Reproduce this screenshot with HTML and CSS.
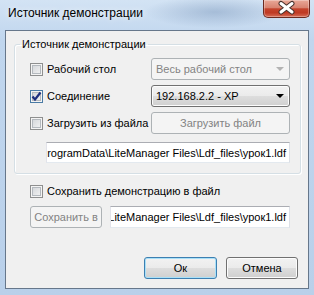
FILE: index.html
```html
<!DOCTYPE html>
<html lang="ru">
<head>
  <meta charset="UTF-8">
  <title>Источник демонстрации</title>
  <link rel="stylesheet" href="styles.css">
</head>
<body>

<div class="window">
  <div class="titlebar">
    <span class="title">Источник демонстрации</span>
    <div class="close">
      <svg width="47" height="18" viewBox="0 0 47 18">
        <path d="M18 4.5 L29 13 M29 4.5 L18 13" stroke="#47312c" stroke-width="5" stroke-linecap="round" fill="none"/>
        <path d="M18 4.5 L29 13 M29 4.5 L18 13" stroke="#fff" stroke-width="3" stroke-linecap="round" fill="none"/>
      </svg>
    </div>
  </div>

  <div class="client">
    <fieldset class="group">
      <legend>Источник демонстрации</legend>
      <div class="group-body">
        <label class="check"><span class="box"></span>Рабочий стол</label>
        <div class="combo disabled"><span>Весь рабочий стол</span><span class="arrow"></span></div>

        <label class="check"><span class="box checked">
          <svg width="11" height="11" viewBox="0 0 11 11"><path d="M1.5 5.5 L4 8.5 L9.5 1.5" stroke="#1d2f7e" stroke-width="2.2" fill="none"/></svg>
        </span>Соединение</label>
        <div class="combo"><span>192.168.2.2 - XP</span><span class="arrow"></span></div>

        <label class="check"><span class="box"></span>Загрузить из файла</label>
        <button class="btn disabled">Загрузить файл</button>

        <div class="edit path-load"><span>rogramData\LiteManager Files\Ldf_files\урок1.ldf</span></div>
      </div>
    </fieldset>

    <div class="save">
      <label class="check"><span class="box"></span>Сохранить демонстрацию в файл</label>
      <div class="save-row">
        <button class="btn disabled save-btn">Сохранить в</button>
        <div class="edit path-save"><span>LiteManager Files\Ldf_files\урок1.ldf</span></div>
      </div>
    </div>

    <div class="actions">
      <button class="btn default ok">Ок</button>
      <button class="btn cancel">Отмена</button>
    </div>
  </div>
</div>

</body>
</html>
```

FILE: styles.css
```css
html, body { margin: 0; }
body { width: 314px; height: 295px; overflow: hidden; font-family: "Segoe UI", "Liberation Sans", sans-serif; font-size: 11px; color: #000; }

.window { box-sizing: border-box; height: 295px; display: flex; flex-direction: column; padding: 0 5px 6px 5px;
  background: radial-gradient(ellipse 70px 16px at 215px 12px, rgba(92, 124, 166, .35), transparent),
              linear-gradient(#d3e3f4, #c0d6ee 40px, #b9d0ea); }

.titlebar { height: 30px; display: flex; align-items: flex-start; }
.title { margin: 6px 0 0 3px; font-size: 12px; line-height: 15px; text-shadow: 0 0 6px rgba(255,255,255,.9); }
.close { margin-left: auto; margin-right: -1px; width: 47px; height: 18px; box-sizing: border-box; border: 1px solid #6b2a20; border-top: none; border-radius: 0 0 5px 5px;
  background: linear-gradient(#e9a898 0%, #d88370 45%, #c4432c 52%, #bf3a24 75%, #d66d57 100%);
  box-shadow: inset 0 0 0 1px rgba(255,255,255,.3); overflow: hidden; }
.close svg { display: block; margin: -1px 0 0 -1px; }

.client { flex: 1; display: flex; flex-direction: column; background: #f0f0f0; border: 1px solid #66778b; }

.group { margin: 6px 7px 0 8px; padding: 0; border: 1px solid #d5dfe5; border-radius: 3px; box-shadow: inset 1px 1px 0 #fff, 1px 1px 0 #fff; min-width: 0; }
.group legend { margin-left: 5px; padding: 0 2px; line-height: 15px; }
.group-body { display: grid; grid-template-columns: 121px 139px; grid-auto-rows: 22px; row-gap: 5px; padding: 6px 10px 12px 15px; }

.check { display: flex; align-items: center; gap: 4px; white-space: nowrap; }
.box { width: 13px; height: 13px; box-sizing: border-box; flex: none; border: 1px solid #8e8f8f;
  background: linear-gradient(135deg, #cfd2d6, #f6f6f6);
  box-shadow: inset 0 0 0 1px #f4f4f4, inset 0 0 0 2px #b4b9be; }
.box.checked { border-color: #4a7ba5; position: relative; }
.box.checked svg { display: block; position: absolute; left: 0; top: 0; }

.btn, .combo { height: 22px; box-sizing: border-box; border: 1px solid #707070; border-radius: 3px; font: inherit; color: #000; padding: 0;
  background: linear-gradient(#f2f2f2 0%, #ebebeb 48%, #dddddd 52%, #cfcfcf 100%);
  box-shadow: inset 0 0 0 1px #fcfcfc; }
.btn.disabled, .combo.disabled { border-color: #adb2b5; background: #f4f4f4; box-shadow: none; color: #838383; }
.btn.default { border-color: #3c7fb1; box-shadow: inset 0 0 0 1px #a9e0f8; }

.combo { display: flex; align-items: center; justify-content: space-between; padding: 0 5px 0 4px; }
.arrow { width: 0; height: 0; border-left: 4px solid transparent; border-right: 4px solid transparent; border-top: 4px solid #000; }
.combo.disabled .arrow { border-top-color: #b3b3b3; }

.edit { height: 21px; box-sizing: border-box; background: #fff; border: 1px solid; border-color: #abadb3 #dbdfe6 #e3e9ef #e2e3ea;
  display: flex; align-items: center; justify-content: flex-end; overflow: hidden; white-space: nowrap; padding: 0 3px; }
.path-load { grid-column: 1 / 3; margin: 3px 0 0 16px; }

.save { margin: 6px 0 0 24px; }
.save .check { height: 22px; }
.save-row { display: flex; gap: 8px; margin-top: 4px; }
.save-btn { width: 72px; height: 22px; }
.path-save { width: 180px; height: 22px; }

.actions { margin-top: auto; display: flex; justify-content: flex-end; gap: 9px; padding: 0 10px 9px 0; }
.ok { width: 73px; }
.cancel { width: 72px; }
```
